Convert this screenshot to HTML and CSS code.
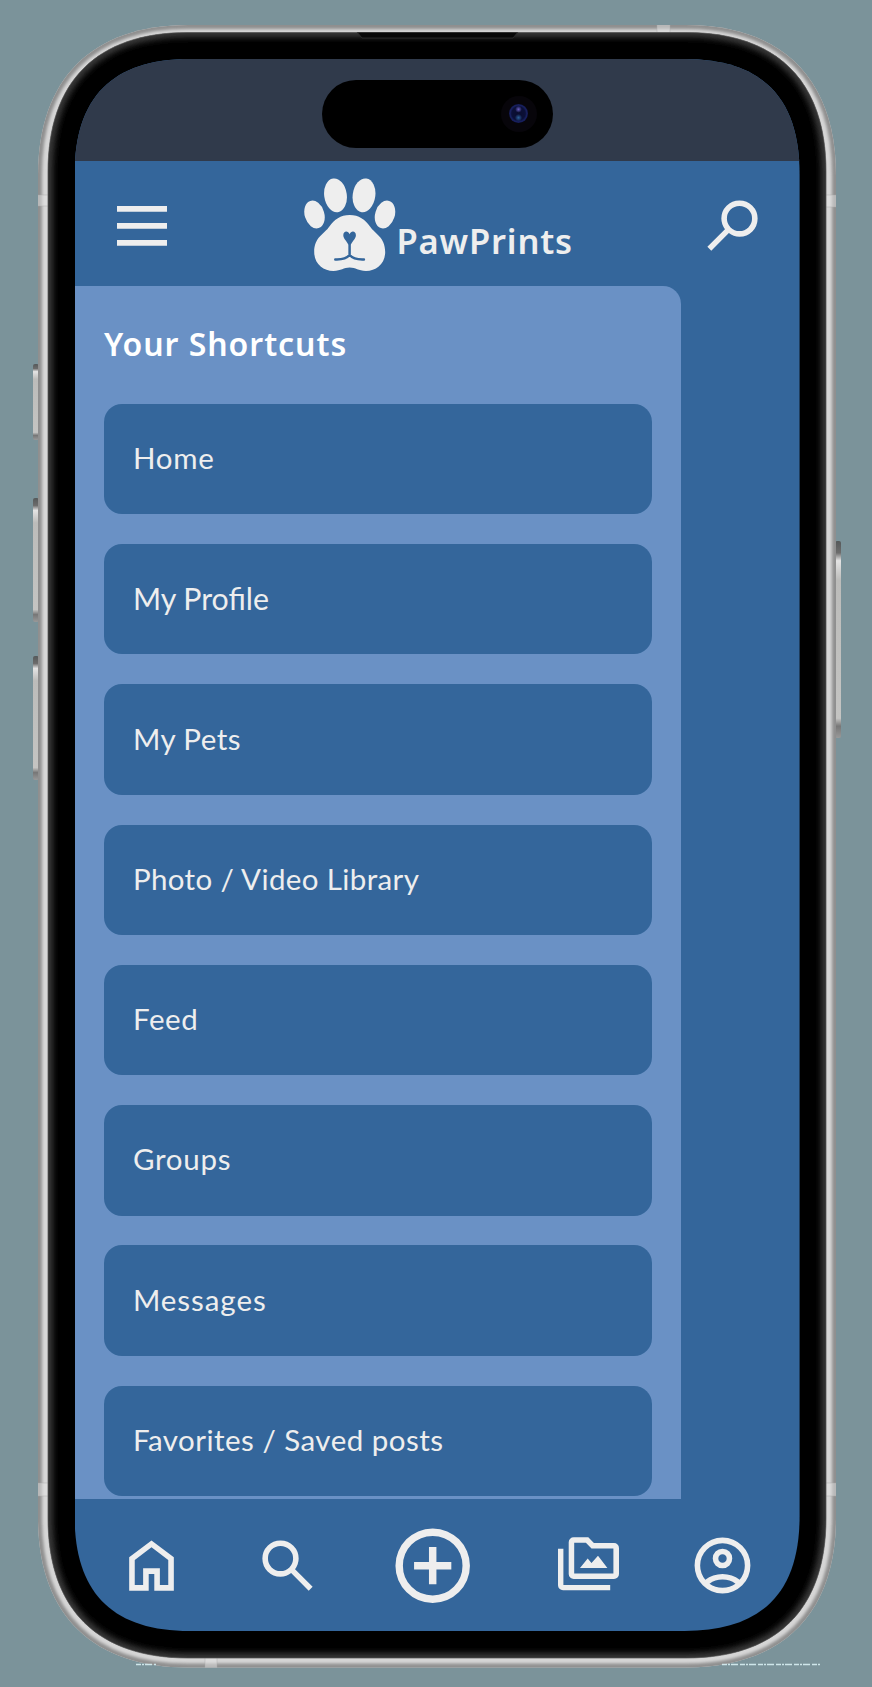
FILE: index.html
```
<!DOCTYPE html>
<html lang="en">
<head>
<meta charset="utf-8">
<title>PawPrints</title>
<link rel="stylesheet" href="styles.css">
</head>
<body>
<div class="stage">
  <svg class="device" viewBox="0 0 872 1687" aria-hidden="true">
    <defs>
      <linearGradient id="btn" x1="0" y1="0" x2="0" y2="1">
        <stop offset="0" stop-color="#55595a"/><stop offset=".06" stop-color="#6c6c6c"/><stop offset=".1" stop-color="#e4e4e4"/><stop offset=".2" stop-color="#bcbcba"/>
        <stop offset=".9" stop-color="#c4c4c2"/><stop offset=".94" stop-color="#777"/><stop offset="1" stop-color="#999"/>
      </linearGradient>
      <filter id="soft" x="-5%" y="-5%" width="110%" height="110%"><feGaussianBlur stdDeviation="3"/></filter>
      <filter id="edge" x="-5%" y="-5%" width="110%" height="110%"><feGaussianBlur stdDeviation="1.8"/></filter>
      <path id="metal" d="M38 175C38 79 92 25 188 25H686C782 25 836 79 836 175V1518C836 1614 782 1667.5 686 1667.5H188C92 1667.5 38 1614 38 1518Z"/>
      <path id="bezel" d="M48 172C48 81 97 32.500 188 32.500H686C777 32.500 826 81 826 172V1518C826 1609 777 1658 686 1658H188C97 1658 48 1609 48 1518Z"/>
      <clipPath id="inMetal"><use href="#metal"/></clipPath>
      <clipPath id="inBezel"><use href="#bezel"/></clipPath>
    </defs>
    <g fill="url(#btn)">
      <rect x="33" y="364" width="6" height="76" rx="2"/>
      <rect x="33" y="498" width="6" height="124" rx="2"/>
      <rect x="33" y="656" width="6" height="124" rx="2"/>
      <rect x="835" y="541" width="6" height="197" rx="2"/>
    </g>
    <use href="#metal" fill="#d6d6d6"/>
    <g clip-path="url(#inMetal)">
      <use href="#metal" fill="none" stroke="#8f8f8f" stroke-width="8" filter="url(#edge)"/>
      <g fill="#e2e2e2" fill-opacity=".5" stroke="#aaaaaa" stroke-opacity=".6" stroke-width=".7">
        <path d="M36 195h14v11H36zM824 195h14v12h-14zM36 1483h14v13H36zM824 1483h14v13h-14zM657 24h13v10h-13zM205 1656h12v13h-12z"/>
      </g>
    </g>
    <use href="#bezel" fill="#000" stroke="#777" stroke-width="1"/>
    <g clip-path="url(#inBezel)">
      <use href="#bezel" fill="none" stroke="#3d3d3d" stroke-width="9" filter="url(#soft)"/>
      <path d="M357 32l5 6h151l5-6z" fill="#080808" stroke="#303030" stroke-width=".8"/>
    </g>
    <path d="M136 1664.500h20M722 1664.500h99" stroke="#cfe6ea" stroke-width="1.300" stroke-dasharray="5 1 2 1 7 2"/>
  </svg>

  <main class="screen">
    <div class="status">
      <div class="island"><span class="camera"><span class="lens"></span></span></div>
    </div>

    <header class="header">
      <svg class="menu-icon" viewBox="0 0 50 40"><path d="M0 0h50v5.800H0zM0 17h50v5.800H0zM0 34h50v5.800H0z"/></svg>
      <div class="brand">
        <svg class="paw" viewBox="303 177 94 95">
          <ellipse cx="314.500" cy="214.500" rx="9.800" ry="14.200" transform="rotate(-17 314.500 214.500)"/>
          <ellipse cx="335.500" cy="195.300" rx="11.300" ry="17" transform="rotate(-8 335.500 195.300)"/>
          <ellipse cx="364" cy="195.300" rx="11.300" ry="17" transform="rotate(8 364 195.300)"/>
          <ellipse cx="385" cy="214.500" rx="9.800" ry="14.200" transform="rotate(17 385 214.500)"/>
          <path d="M349.700 215C359 215 365 219.500 370 226.500C375 234 385.200 237 385.200 252C385.200 264 376 271 366 271C358 271 356 267.600 349.700 267.600C343.400 267.600 341.400 271 333.400 271C323.400 271 314.200 264 314.200 252C314.200 237 324.400 234 329.400 226.500C334.400 219.500 340.400 215 349.700 215Z"/>
          <path class="cut" d="M349.600 234.200C348 230.200 343.300 231 343.300 235.200C343.300 238.600 346.500 240.500 348.300 244.500H350.900C352.700 240.500 355.900 238.600 355.900 235.200C355.900 231 351.200 230.200 349.600 234.200Z"/>
          <path class="mouth" d="M349.600 243V255M335.300 259.400C342 259.700 346.500 258.500 349.600 255C352.700 258.500 357.200 259.700 363.900 259.400"/>
        </svg>
        <span class="brand-name">PawPrints</span>
      </div>
      <svg class="icon find" viewBox="0 -960 960 960"><path d="M784-120 532-372q-30 24-69 38t-83 14q-109 0-184.500-75.500T120-580q0-109 75.500-184.500T380-840q109 0 184.500 75.500T640-580q0 44-14 83t-38 69l252 252-56 56ZM380-400q75 0 127.500-52.500T560-580q0-75-52.500-127.500T380-760q-75 0-127.500 52.500T200-580q0 75 52.500 127.500T380-400Z"/></svg>
    </header>

    <section class="drawer">
      <h1 class="title">Your Shortcuts</h1>
      <nav class="list">
        <a class="item home">Home</a>
        <a class="item profile">My Profile</a>
        <a class="item pets">My Pets</a>
        <a class="item photos">Photo / Video Library</a>
        <a class="item feed">Feed</a>
        <a class="item groups">Groups</a>
        <a class="item messages">Messages</a>
        <a class="item saved">Favorites / Saved posts</a>
      </nav>
    </section>

    <footer class="tabs">
      <svg class="icon" viewBox="0 -960 960 960"><path d="M240-200h120v-240h240v240h120v-360L480-740 240-560v360Zm-80 80v-480l320-240 320 240v480H520v-240h-80v240H160Z"/></svg>
      <svg class="icon" viewBox="0 -960 960 960"><path d="M784-120 532-372q-30 24-69 38t-83 14q-109 0-184.500-75.500T120-580q0-109 75.500-184.500T380-840q109 0 184.500 75.500T640-580q0 44-14 83t-38 69l252 252-56 56ZM380-400q75 0 127.500-52.500T560-580q0-75-52.500-127.500T380-760q-75 0-127.500 52.500T200-580q0 75 52.500 127.500T380-400Z"/></svg>
      <svg class="icon add" viewBox="0 -960 960 960"><path d="M440-280h80v-160h160v-80H520v-160h-80v160H280v80h160v160Zm40 200q-83 0-156-31.500T197-197q-54-54-85.500-127T80-480q0-83 31.500-156T197-763q54-54 127-85.500T480-880q83 0 156 31.500T763-763q54 54 85.500 127T880-480q0 83-31.500 156T763-197q-54 54-127 85.500T480-80Zm0-80q134 0 227-93t93-227q0-134-93-227t-227-93q-134 0-227 93t-93 227q0 134 93 227t227 93Z"/></svg>
      <svg class="icon library" viewBox="556 1532 67 67">
        <path d="M559 1548.700h5.400v36.200h46.800v5.400H564a5 5 0 0 1-5-5z"/>
        <path fill-rule="evenodd" d="M574.700 1537.200h14.600l5.600 5.800h20.100a5 5 0 0 1 5 5v26a5 5 0 0 1-5 5h-40.300a5 5 0 0 1-5-5v-31.800a5 5 0 0 1 5-5zM575.200 1542.800v30.600h39.200v-24.800h-21.900l-5.600-5.800z"/>
        <path d="M581 1568l7.700-9.600 3.800 4.600 6.500-7.200 9.400 12.200z"/>
      </svg>
      <svg class="icon account" viewBox="0 -960 960 960"><path d="M234-276q51-39 114-61.500T480-360q69 0 132 22.500T726-276q35-41 54.500-93T800-480q0-133-93.500-226.500T480-800q-133 0-226.500 93.500T160-480q0 59 19.500 111t54.500 93Zm246-164q-59 0-99.500-40.500T340-580q0-59 40.500-99.500T480-720q59 0 99.500 40.500T620-580q0 59-40.500 99.500T480-440Zm0 360q-83 0-156-31.500T197-197q-54-54-85.500-127T80-480q0-83 31.500-156T197-763q54-54 127-85.500T480-880q83 0 156 31.500T763-763q54 54 85.500 127T880-480q0 83-31.500 156T763-197q-54 54-127 85.500T480-80Zm0-80q53 0 100-15.500t86-44.500q-39-29-86-44.500T480-280q-53 0-100 15.500T294-220q39 29 86 44.500T480-160Zm0-360q26 0 43-17t17-43q0-26-17-43t-43-17q-26 0-43 17t-17 43q0 26 17 43t43 17Z"/></svg>
    </footer>
  </main>
</div>
</body>
</html>
```
FILE: styles.css
```
* { box-sizing: border-box; }
body { margin: 0; background: #7b939a; }
svg { display: block; fill: #eeeeee; flex: none; }

.stage {
  position: relative;
  width: 872px;
  height: 1687px;
  padding: 59px 72.4px 56px 74.6px;
  overflow: hidden;
}
.device { position: absolute; left: 0; top: 0; width: 872px; height: 1687px; }

.screen {
  position: relative;
  display: flex;
  flex-direction: column;
  width: 725px;
  height: 1572px;
  background: #34669b;
  font-family: Lato, "Noto Sans", sans-serif;
  color: #eeeeee;
  clip-path: path("M0 115C0 38 38 0 115 0H610C687 0 725 38 725 115V1457C725 1534 687 1572 610 1572H115C38 1572 0 1534 0 1457Z");
}

.status {
  display: flex;
  justify-content: center;
  height: 101.700px;
  flex: none;
  padding-top: 20.500px;
  background: #303a4b;
}
.island {
  display: flex;
  align-items: center;
  justify-content: flex-end;
  width: 231px;
  height: 68px;
  padding-right: 16px;
  border-radius: 34px;
  background: #000;
}
.camera {
  display: flex;
  align-items: center;
  justify-content: center;
  width: 36px;
  height: 36px;
  border-radius: 50%;
  background: #07050a;
}
.lens {
  width: 19px;
  height: 19px;
  border-radius: 50%;
  background:
    radial-gradient(circle at 50% 28%, #6a5fc0 0, transparent 20%),
    radial-gradient(circle at 50% 72%, #2b609a 0, transparent 22%),
    radial-gradient(circle, #0a0d2e 0, #0b1038 50%, #182060 62%, #0a0a20 100%);
}

.header {
  display: flex;
  align-items: flex-start;
  height: 125px;
  flex: none;
  padding-left: 42px;
}
.menu-icon { width: 50px; height: 40px; margin-top: 45.500px; }
.brand { display: flex; align-items: flex-start; width: 396px; margin: 16px 0 0 136px; }
.paw { width: 94px; height: 95px; }
.paw .cut { fill: #34669b; }
.paw .mouth { fill: none; stroke: #34669b; stroke-width: 2.500; stroke-linecap: round; }
.brand-name {
  margin: 40.500px 0 0 0;
  font: 600 34.500px/48px "Noto Sans", "Open Sans", sans-serif;
  letter-spacing: 0.800px;
}
.icon { width: 67px; height: 67px; }
.find { transform: scaleX(-1); margin: 31px 0 0 0; }

.drawer {
  width: 606.700px;
  height: 1213.300px;
  flex: none;
  padding: 0 29.300px;
  overflow: hidden;
  background: #6a91c5;
  border-top-right-radius: 18px;
}
.title {
  margin: 35px 0 0;
  height: 83px;
  color: #ffffff;
  font: 600 32px/46px "Noto Sans", "Open Sans", sans-serif;
  letter-spacing: 0.950px;
}
.list { display: flex; flex-direction: column; gap: 29.800px; }
.item {
  display: flex;
  align-items: center;
  height: 110.500px;
  flex: none;
  padding: 0 0 2px 29px;
  border-radius: 18px;
  background: #34669b;
  font-size: 29.500px;
  line-height: 40px;
  white-space: nowrap;
}
.home { letter-spacing: 0.800px; }
.profile { font-size: 30.300px; }
.pets { letter-spacing: 0.450px; }
.photos { letter-spacing: 0.380px; }
.feed { letter-spacing: 0.600px; }
.groups { letter-spacing: 0.750px; }
.messages { letter-spacing: 0.950px; }
.saved { letter-spacing: 0.480px; }

.tabs {
  display: flex;
  align-items: center;
  height: 132px;
  flex: none;
  padding: 1.500px 0 0 43.500px;
}
.tabs .icon + .icon { margin-left: 68.500px; }
.tabs .icon.add { width: 89.400px; height: 89.400px; margin-left: 67.200px; }
.tabs .icon.library { margin-left: 78.300px; }
.tabs .icon.account { margin-left: 66.400px; }
```
